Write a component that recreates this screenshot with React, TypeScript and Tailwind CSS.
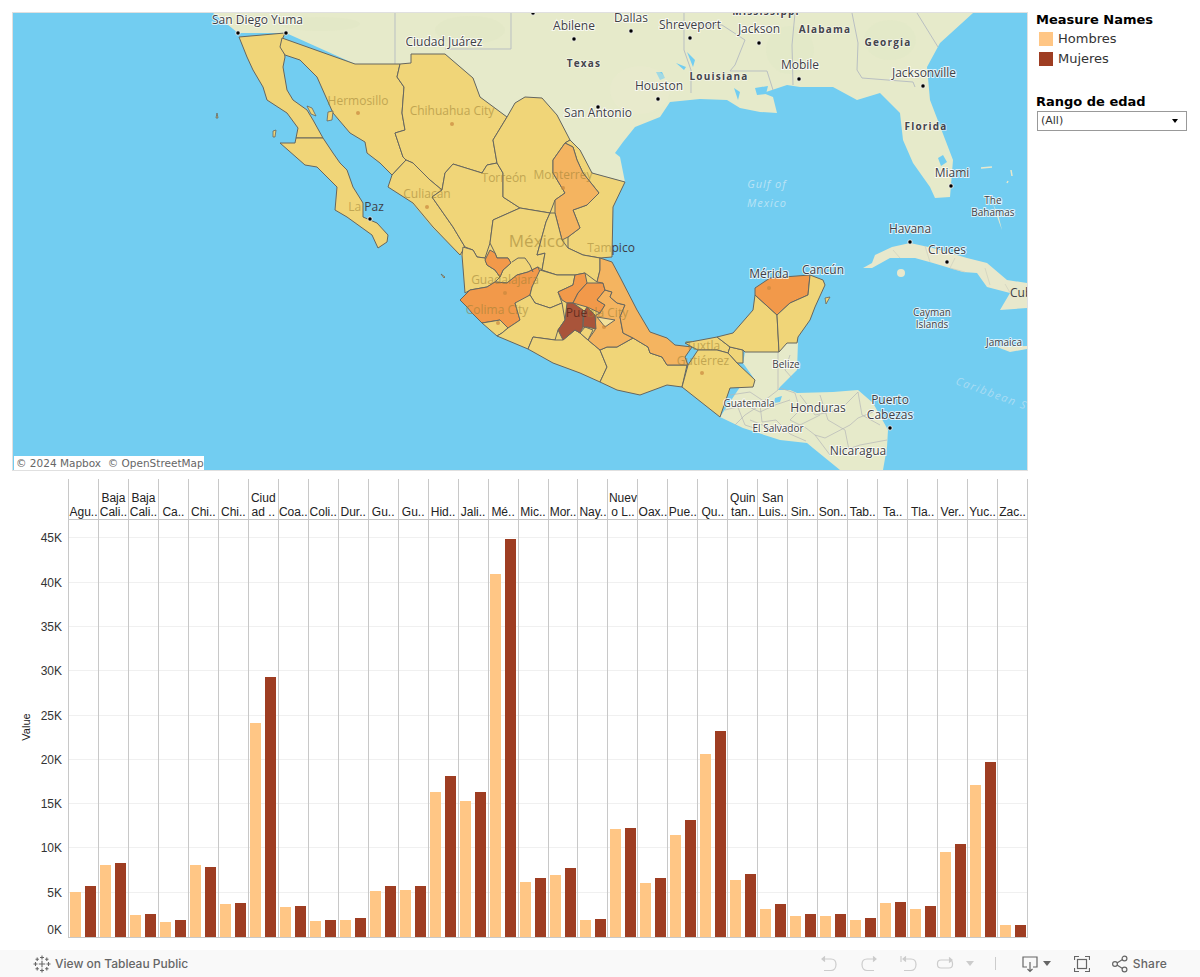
import type { ReactNode } from 'react';

const HOMBRES = '#ffc685';
const MUJERES = '#9e3d22';
const BASE = '#f0d578';
const MID = '#f4b460';
const ORANGE = '#f2994a';
const DARK = '#a9543a';

// [label lines, hombres, mujeres] values are in thousands
const STATES: [string[], number, number][] = [
  [['Agu..'], 5.1, 5.8],
  [['Baja', 'Cali..'], 8.15, 8.4],
  [['Baja', 'Cali..'], 2.45, 2.6],
  [['Ca..'], 1.65, 1.9],
  [['Chi..'], 8.15, 7.9],
  [['Chi..'], 3.7, 3.85],
  [['Ciud', 'ad ..'], 24.2, 29.3],
  [['Coa..'], 3.35, 3.5],
  [['Coli..'], 1.8, 1.9],
  [['Dur..'], 1.9, 2.1],
  [['Gu..'], 5.2, 5.8],
  [['Gu..'], 5.3, 5.8],
  [['Hid..'], 16.4, 18.2],
  [['Jali..'], 15.4, 16.4],
  [['Mé..'], 41, 44.9],
  [['Mic..'], 6.2, 6.7],
  [['Mor..'], 7.0, 7.8],
  [['Nay..'], 1.9, 2.0],
  [['Nuev', 'o L..'], 12.2, 12.3],
  [['Oax..'], 6.1, 6.7],
  [['Pue..'], 11.5, 13.2],
  [['Qu..'], 20.6, 23.2],
  [['Quin', 'tan..'], 6.4, 7.1],
  [['San', 'Luis..'], 3.2, 3.7],
  [['Sin..'], 2.4, 2.55],
  [['Son..'], 2.4, 2.6],
  [['Tab..'], 1.95, 2.1],
  [['Ta..'], 3.8, 3.9],
  [['Tla..'], 3.2, 3.5],
  [['Ver..'], 9.6, 10.5],
  [['Yuc..'], 17.2, 19.7],
  [['Zac..'], 1.4, 1.4],
];

const TICKS = [0, 5, 10, 15, 20, 25, 30, 35, 40, 45];
const PX_PER_K = 8.86;

const LAND_US =
  '395,13 205,13 213,13 222,20 238,33 286,33 355,64 411,64 411,54 445,54 473,78 480,97 507,117 515,103 525,97 542,98 557,115 570,140 580,150 592,173 625,182 620,157 615,153 623,142 635,127 660,117 670,102 700,99 727,100 740,108 760,112 777,113 773,97 763,93 787,85 800,87 833,87 857,100 880,93 900,113 903,140 913,163 930,187 935,198 950,197 953,160 930,100 927,67 940,43 973,13';

const CENTRAL =
  '745,352 778,352 787,343 798,342 797,370 780,387 778,390 790,390 797,393 833,392 858,390 873,403 888,430 887,447 883,470 840,470 813,448 807,443 780,440 743,428 720,417 740,387 755,380 743,363';

const CUBA =
  '863,268 872,263 875,255 892,247 910,243 933,248 967,258 987,263 1007,280 1027,283 1027,308 1000,310 1010,293 987,287 977,273 963,272 933,263 915,258 890,258 872,268';

const MEX_BASE = '392,175 507,117 600,258 612,290 625,340 600,370 535,345 500,333 470,300 462,256 433,228 413,204';

const REGIONS: [string, string][] = [
  // Baja California
  ['239,37 285,33 282,40 285,57 283,67 287,90 293,100 307,110 313,120 323,138 296,138 298,128 287,113 267,100 263,87 253,70 247,57', BASE],
  // Baja California Sur
  ['296,138 323,138 333,153 340,163 347,170 353,187 363,203 363,217 377,223 388,235 387,242 378,248 372,235 347,217 335,210 337,187 317,167 305,165 280,143 295,143', BASE],
  // Sonora
  ['282,38 355,64 400,64 397,77 404,87 402,113 405,130 395,133 403,157 406,160 392,175 380,163 367,153 365,142 350,133 333,113 317,77 300,60 285,55 280,47', BASE],
  // Chihuahua
  ['400,64 411,63 411,54 445,54 473,78 480,97 507,117 493,140 497,163 487,165 482,173 453,164 445,173 442,190 430,180 413,163 406,160 403,157 395,133 405,130 402,113 404,87 397,77', BASE],
  // Sinaloa
  ['392,175 406,160 413,163 430,180 442,190 432,197 453,227 465,247 460,255 433,227 413,203 388,187', BASE],
  // Durango
  ['445,173 453,164 482,173 487,165 497,163 503,173 503,197 520,208 493,220 490,243 485,258 477,257 473,250 465,247 453,227 432,197 442,190', BASE],
  // Coahuila
  ['507,117 515,103 525,97 542,98 557,115 570,140 565,143 553,160 553,173 565,193 555,200 550,213 520,208 503,197 503,173 497,163 493,140', BASE],
  // Tamaulipas
  ['570,140 580,150 592,173 625,182 613,207 612,257 600,258 583,255 568,248 568,237 580,228 573,210 587,205 599,193 583,173 577,160 573,147 565,143', BASE],
  // Nuevo Leon
  ['565,143 573,147 577,160 583,173 599,193 587,205 573,210 580,228 568,237 562,240 555,213 555,200 565,193 553,173 553,160', MID],
  // Zacatecas
  ['493,220 520,208 550,213 546,222 537,255 545,253 542,270 538,267 528,272 517,275 507,283 495,282 500,277 503,270 511,263 508,258 497,258 495,253 490,243', BASE],
  // San Luis Potosi
  ['550,213 555,213 562,240 568,248 583,255 600,258 600,270 597,282 585,273 575,275 557,275 542,270 545,253 537,255 546,222', BASE],
  // Nayarit
  ['465,293 462,255 463,247 473,250 477,257 485,258 487,265 495,270 500,277 495,282 487,287 470,290', BASE],
  // Aguascalientes
  ['490,250 495,253 497,258 508,258 511,263 503,270 500,277 495,270 487,265 485,260', ORANGE],
  // Jalisco
  ['460,300 470,290 487,287 495,282 507,283 517,275 528,272 538,267 540,272 532,287 530,295 520,302 515,303 520,320 508,328 500,320 482,323 472,313 467,307', ORANGE],
  // Colima
  ['482,323 500,320 508,328 502,333 497,336', BASE],
  // Guanajuato
  ['540,270 557,275 575,275 573,285 558,292 562,303 550,308 535,303 530,295 532,287', BASE],
  // Queretaro
  ['558,292 573,285 575,275 585,273 587,283 578,293 573,303 567,303 562,300', ORANGE],
  // Hidalgo
  ['587,283 603,283 605,290 597,300 605,305 600,313 587,307 573,303 578,293', ORANGE],
  // Michoacan
  ['515,303 530,295 535,303 550,308 562,303 565,320 558,330 555,340 533,337 528,349 497,336 502,333 508,328 520,320', BASE],
  // Guerrero
  ['528,349 533,337 555,340 563,340 575,330 580,333 588,340 600,350 607,367 600,382 580,373 553,363', BASE],
  // Oaxaca
  ['600,350 607,347 617,347 633,338 648,347 650,353 662,357 667,365 687,365 682,387 667,385 640,395 617,390 600,382 607,367', BASE],
  // Puebla
  ['605,290 612,292 610,297 617,303 625,305 620,317 623,333 633,338 617,347 607,347 600,350 588,340 595,330 596,315 600,313 605,305 597,300', MID],
  // Tlaxcala
  ['597,317 615,320 605,327', '#f3e09a'],
  // Veracruz
  ['600,258 612,262 620,277 637,310 650,332 667,338 675,345 692,347 685,357 688,365 667,365 662,357 650,353 648,347 633,338 623,333 620,317 625,305 617,303 610,297 612,292 605,290 603,283 597,282 600,270', MID],
  // Morelos
  ['580,333 585,327 593,330 588,340', BASE],
  // Estado de Mexico
  ['567,303 573,303 583,310 583,327 580,333 575,330 563,340 558,330 565,320', DARK],
  ['587,307 595,315 596,329 587,327 583,327 584,312', DARK],
  // Tabasco
  ['685,343 717,337 730,347 728,353 717,350 698,350 692,347', BASE],
  ['730,347 743,350 743,363 737,363 728,353', BASE],
  // Chiapas
  ['688,365 698,350 717,350 728,353 737,363 755,380 753,387 730,388 720,417 682,387', BASE],
  // Campeche
  ['717,337 733,333 753,310 755,295 777,315 779,352 745,352 743,350 730,347', BASE],
  // Yucatan
  ['755,295 755,288 770,278 810,275 808,295 790,303 777,315', ORANGE],
  // Quintana Roo
  ['810,275 823,280 825,285 815,307 810,320 798,337 797,343 787,343 779,352 777,315 790,303 808,295', BASE],
];

const US_LINES = [
  '395,13 395,64',
  '511,13 511,49 445,49',
  '684,13 684,50 691,70 691,93',
  '684,25 722,25 745,40 735,65 730,71 767,71 773,90',
  '795,13 792,45 793,85',
  '852,13 858,43 857,70 862,78 913,82 915,87',
  '917,13 938,47',
];

const CA_LINES = [
  '778,352 778,390 760,404 762,422 776,420 790,434 806,441',
  '780,388 795,393 800,410 790,420 806,428 815,435 825,438 850,425 858,418 873,412',
  '730,395 750,392 765,402 745,415 735,425',
  '800,395 815,415 840,410 858,392',
  '815,435 830,455 860,445 887,440',
  '750,420 770,428 800,425 820,415',
  '725,410 745,405 760,412 775,405 790,400',
  '735,400 745,425 760,430',
  '820,395 828,420 845,430 850,455',
  '858,392 862,415 880,425',
  '790,355 785,370 792,378',
];

const CUBA_LINES = ['893,250 900,258', '925,246 930,262', '955,258 950,268 965,272', '985,268 990,285', '1005,284 1012,296'];

type Label = [string, number, number, number?];
const DARK_LABELS: Label[] = [
  ['San Diego', 240, 24, 12],
  ['Yuma', 287, 24, 12],
  ['Ciudad Juárez', 444, 46, 12],
  ['Abilene', 574, 30, 12],
  ['Dallas', 631, 22, 12],
  ['Shreveport', 690, 29, 12],
  ['Jackson', 759, 33, 12],
  ['Mobile', 800, 69, 12],
  ['Jacksonville', 924, 77, 12],
  ['Houston', 659, 90, 12],
  ['San Antonio', 598, 117, 12],
  ['Miami', 952, 177, 12],
  ['Havana', 910, 233, 12],
  ['Cruces', 947, 254, 12],
  ['Mérida', 769, 278, 12],
  ['Cancún', 823, 274, 12],
  ['Honduras', 818, 412, 12],
  ['Puerto', 890, 404, 12],
  ['Cabezas', 890, 419, 12],
  ['Nicaragua', 858, 455, 12],
  ['The', 993, 204, 10],
  ['Bahamas', 993, 216, 10],
  ['Cayman', 932, 316, 10],
  ['Islands', 932, 328, 10],
  ['Jamaica', 1004, 346, 10],
  ['Belize', 786, 368, 10],
  ['Guatemala', 749, 407, 10],
  ['El Salvador', 778, 432, 10],
];

const REGION_LABELS: Label[] = [
  ['Alabama', 825, 33],
  ['Georgia', 888, 46],
  ['Texas', 584, 67],
  ['Louisiana', 719, 80],
  ['Florida', 926, 130],
  ['Mississippi', 766, 15],
];

const MUTED_LABELS: Label[] = [
  ['Hermosillo', 358, 105, 12],
  ['Chihuahua City', 452, 115, 12],
  ['Torreón', 504, 182, 12],
  ['Monterrey', 563, 179, 12],
  ['Culiacán', 427, 198, 12],
  ['Guadalajara', 505, 284, 12],
  ['Colima City', 497, 314, 12],
  ['Tuxtla', 703, 350, 12],
  ['Gutiérrez', 703, 365, 12],
  ['México', 537, 247, 17],
];

const BLACK_DOTS = [
  [238, 33], [286, 33], [533, 13], [574, 39], [631, 31], [690, 38], [759, 43], [799, 79], [923, 86],
  [951, 186], [910, 242], [947, 262], [598, 107], [658, 99], [890, 428], [370, 219],
];
const MUTED_DOTS = [
  [358, 113], [452, 124], [427, 207], [563, 188], [505, 293], [498, 323], [604, 327], [702, 373], [769, 288],
];

function MapArea() {
  return (
    <div className="relative w-[1016px] h-[459px] border border-[#e0e0e0] overflow-hidden shrink-0">
      <svg viewBox="13 13 1014 457" width={1014} height={457} className="block bg-[#72cdf1] font-['Open_Sans',sans-serif]">
        <polygon points={LAND_US} fill="#e6eaca" />
        <polygon points={CENTRAL} fill="#e6eaca" />
        <polygon points={CUBA} fill="#e8e8cc" />
        <ellipse cx="901" cy="273" rx="4" ry="4" fill="#e8e8cc" />
        <polygon points="997,347 1027,346 1027,349 1010,352" fill="#e8e8cc" />
        <polygon points="993,204 998,214 1002,230 999,222" fill="#e8e8cc" />
        <path d="M981 168 L992 167 M1011 170 L1012 176 M1008 181 L1007 183" stroke="#e8e8cc" strokeWidth="1.5" fill="none" />
        <path d="M938 158 L943 155 L947 162 L941 166 Z M656 72 L660 80 L665 78 L662 72 Z M687 52 L693 67 L695 60 Z M676 63 L684 70 L686 67 Z M734 88 L738 100 L740 92 Z M755 88 L768 86 L766 94 L757 95 Z M775 398 L782 396 L780 402 L774 403 Z" fill="#72cdf1" />
        <ellipse cx="320" cy="24" rx="40" ry="7" fill="#dfe6bf" opacity="0.3" />
        <ellipse cx="470" cy="30" rx="35" ry="14" fill="#dfe6bf" opacity="0.3" />
        <ellipse cx="640" cy="90" rx="30" ry="24" fill="#eaead0" opacity="0.4" />
        <ellipse cx="790" cy="50" rx="24" ry="24" fill="#dfe8c2" opacity="0.3" />
        <ellipse cx="890" cy="40" rx="26" ry="20" fill="#dfe8c2" opacity="0.3" />
        {US_LINES.map((p) => (
          <polyline key={p} points={p} fill="none" stroke="#b9bfc2" strokeWidth="1" />
        ))}
        {CA_LINES.map((p) => (
          <polyline key={p} points={p} fill="none" stroke="#b4b6b8" strokeWidth="0.7" />
        ))}
        {CUBA_LINES.map((p) => (
          <polyline key={p} points={p} fill="none" stroke="#cfd0bd" strokeWidth="0.7" />
        ))}
        <polygon points={MEX_BASE} fill={BASE} />
        {REGIONS.map(([pts, fill], i) => (
          <polygon key={i} points={pts} fill={fill} stroke="#66665f" strokeWidth="1" strokeLinejoin="round" />
        ))}
        <polyline points="512,262 518,258 525,258 530,265 533,272" fill="none" stroke="#66665f" strokeWidth="1" />
        <path d="M307 106 L312 108 L316 116 L311 114 Z M328 112 L333 111 L332 120 L327 121 Z M217 113 L218 118 L216 118 Z M273 131 L276 130 L275 137 L273 137 Z M441 274 L445 277 L444 278 Z M825 298 L830 297 L826 304 Z" fill={BASE} stroke="#66665f" strokeWidth="0.8" />
        {MUTED_DOTS.map(([x, y]) => (
          <circle key={`${x}-${y}`} cx={x} cy={y} r="2" fill="#c9873d" opacity="0.7" />
        ))}
        {BLACK_DOTS.map(([x, y]) => (
          <circle key={`${x}-${y}`} cx={x} cy={y} r="2.2" fill="#000" stroke="#fff" strokeWidth="0.8" />
        ))}
        {MUTED_LABELS.map(([t, x, y, s]) => (
          <text key={t} x={x} y={y} fontSize={s} textAnchor="middle" fill="#9b7f33" opacity="0.55">
            {t}
          </text>
        ))}
        {DARK_LABELS.map(([t, x, y, s]) => (
          <text key={t} x={x} y={y} fontSize={s} textAnchor="middle" fill="#3f3f46" stroke="#ffffff" strokeOpacity="0.75" strokeWidth="2" className="[paint-order:stroke]">
            {t}
          </text>
        ))}
        {REGION_LABELS.map(([t, x, y]) => (
          <text key={t} x={x} y={y} fontSize="10" fontWeight="700" letterSpacing="1.2" textAnchor="middle" fill="#44444c" stroke="#ffffff" strokeOpacity="0.6" strokeWidth="1.5" className="[paint-order:stroke]">
            {t}
          </text>
        ))}
        <text x={611} y={252} fontSize="12" textAnchor="middle" fill="#3f3f46">
          <tspan fill="#9b7f33" fillOpacity="0.55">Tam</tspan>
          <tspan>pico</tspan>
        </text>
        <text x={366} y={211} fontSize="12" textAnchor="middle" fill="#3f3f46">
          <tspan fill="#9b7f33" fillOpacity="0.55">La </tspan>
          <tspan>Paz</tspan>
        </text>
        <text x={597} y={317} fontSize="12" textAnchor="middle" fill="#9b7f33" fillOpacity="0.6">
          <tspan fill="#5d2a1c" fillOpacity="0.9">Pue</tspan>
          <tspan>bla City</tspan>
        </text>
        <text x={1010} y={297} fontSize="12" fill="#3f3f46">Cuba</text>
        <text x={767} y={188} fontSize="11" fontStyle="italic" letterSpacing="1" textAnchor="middle" fill="#b9e3f5">Gulf of</text>
        <text x={767} y={207} fontSize="11" fontStyle="italic" letterSpacing="1" textAnchor="middle" fill="#b9e3f5">Mexico</text>
        <text x={955} y={384} fontSize="11" fontStyle="italic" letterSpacing="1.5" fill="#a9dcf3" transform="rotate(20 955 384)">Caribbean Sea</text>
      </svg>
      <div className="absolute left-[1px] bottom-[0px] h-[14px] w-[190px] bg-white pl-[2px] text-[10.5px] leading-[14px] whitespace-nowrap text-[#666666] font-['DejaVu_Sans',sans-serif]">
        © 2024 Mapbox &nbsp;© OpenStreetMap
      </div>
    </div>
  );
}

function Sidebar() {
  return (
    <div className="ml-[8px] pt-[1px] w-[164px] font-['DejaVu_Sans',sans-serif] text-black">
      <div className="text-[13px] leading-[14px] font-bold">Measure Names</div>
      <div className="mt-[2px] flex items-center h-[20px] pl-[3px] gap-[5px] text-[13px] text-[#333333]">
        <span className="w-[14px] h-[14px] bg-[#ffc685]" />
        Hombres
      </div>
      <div className="flex items-center h-[20px] pl-[3px] gap-[5px] text-[13px] text-[#333333]">
        <span className="w-[14px] h-[14px] bg-[#9e3d22]" />
        Mujeres
      </div>
      <div className="mt-[26px] text-[13px] leading-[14px] font-bold">Rango de edad</div>
      <div className="mt-[2px] ml-[1px] w-[150px] h-[20px] border border-[#999999] flex items-center justify-between pl-[3px] pr-[8px] text-[11px] text-[#333333]">
        (All)
        <span className="w-0 h-0 border-x-[3px] border-x-transparent border-t-[4px] border-t-black" />
      </div>
    </div>
  );
}

function Chart() {
  return (
    <div className="flex mt-[8px] font-['Liberation_Sans',sans-serif]">
      <div className="relative w-[68px] shrink-0 text-[12px] text-[#333333]">
        <span className="absolute left-[12px] top-[241px] -rotate-90 text-[11px] leading-[14px] text-[#222222]">Value</span>
        {TICKS.map((t) => (
          <span
            key={t}
            className="absolute right-[6px] leading-[14px]"
            style={{ top: 458 - t * PX_PER_K - 7 + (t === 0 ? -7 : 0) }}
          >
            {t}K
          </span>
        ))}
      </div>
      <div className="w-[960px] shrink-0 border-l border-[#c8c8c8]">
        <div className="h-[41px] flex border-b border-[#c8c8c8]">
          {STATES.map(([lines], i) => (
            <div key={i} className="flex-1 min-w-0 flex flex-col items-center justify-end border-r border-[#c8c8c8] text-[12px] leading-[14px] text-[#222222]">
              {lines.map((l, j) => (
                <span key={j} className="whitespace-nowrap">{l}</span>
              ))}
            </div>
          ))}
        </div>
        <div className="relative h-[418px] border-b border-[#c8c8c8]">
          {TICKS.slice(1).map((t) => (
            <div key={t} className="absolute inset-x-0 h-px bg-[#f0f0f0]" style={{ bottom: t * PX_PER_K }} />
          ))}
          <div className="absolute inset-0 flex">
            {STATES.map(([, h, m], i) => (
              <div key={i} className="flex-1 min-w-0 flex items-end justify-center gap-[4px] border-r border-[#c8c8c8]">
                <div className="w-[11px]" style={{ height: h * PX_PER_K, backgroundColor: HOMBRES }} />
                <div className="w-[11px]" style={{ height: m * PX_PER_K, backgroundColor: MUJERES }} />
              </div>
            ))}
          </div>
        </div>
      </div>
    </div>
  );
}

function TableauLogo() {
  const cross = (x: number, y: number, s: number, key: number) => (
    <path key={key} d={`M${x - s} ${y}H${x + s}M${x} ${y - s}V${y + s}`} />
  );
  return (
    <svg width="18" height="18" viewBox="0 0 18 18" fill="none" stroke="#666666" strokeWidth="1.1">
      {cross(9, 9, 3.2, 0)}
      {cross(9, 2.5, 2, 1)}
      {cross(9, 15.5, 2, 2)}
      {cross(2.5, 9, 2, 3)}
      {cross(15.5, 9, 2, 4)}
      {cross(4.2, 4.2, 1.7, 5)}
      {cross(13.8, 4.2, 1.7, 6)}
      {cross(4.2, 13.8, 1.7, 7)}
      {cross(13.8, 13.8, 1.7, 8)}
    </svg>
  );
}

function Icon({ w, children, stroke = '#cccccc' }: { w: number; children: ReactNode; stroke?: string }) {
  return (
    <svg width={w} height={18} viewBox={`0 0 ${w} 18`} fill="none" stroke={stroke} strokeWidth="1.2">
      {children}
    </svg>
  );
}

function Toolbar() {
  return (
    <div className="h-[27px] bg-[#f9f9f9] flex items-center font-['Inter',sans-serif] text-[12px] font-medium text-[#666666]">
      <div className="ml-[33px] flex items-center gap-[4px]">
        <TableauLogo />
        <span>View on Tableau Public</span>
      </div>
      <div className="ml-auto mr-[33px] flex items-center">
        <Icon w={18}>
          <path d="M2 4H11C14 4 16 6 16 9.5S14 15.5 11 15.5H4" />
          <path d="M5 1.5L2 4L5 6.5" fill="#cccccc" />
        </Icon>
        <div className="ml-[22px]">
          <Icon w={18}>
            <path d="M16 4H7C4 4 2 6 2 9.5S4 15.5 7 15.5H14" />
            <path d="M13 1.5L16 4L13 6.5" fill="#cccccc" />
          </Icon>
        </div>
        <div className="ml-[22px]">
          <Icon w={18}>
            <path d="M1 1V7" />
            <path d="M3 4H11C14 4 16 6 16 9.5S14 15.5 11 15.5H4" />
            <path d="M6 1.5L3 4L6 6.5" fill="#cccccc" />
          </Icon>
        </div>
        <div className="ml-[18px]">
          <Icon w={18}>
            <rect x="1.5" y="5" width="15" height="8" rx="3.5" />
            <path d="M13 2.5L16 5L13 7.5" fill="#cccccc" />
          </Icon>
        </div>
        <span className="ml-[12px] w-0 h-0 border-x-[4px] border-x-transparent border-t-[5px] border-t-[#cccccc]" />
        <span className="ml-[21px] w-px h-[13px] bg-[#cccccc]" />
        <div className="ml-[26px]">
          <Icon w={16} stroke="#666666">
            <path d="M5 12H1V2H15V12H11" />
            <path d="M8 7V16M5.5 14L8 16.5L10.5 14" />
          </Icon>
        </div>
        <span className="ml-[5px] w-0 h-0 border-x-[4px] border-x-transparent border-t-[5px] border-t-[#666666]" />
        <div className="ml-[23px]">
          <Icon w={16} stroke="#666666">
            <rect x="3.5" y="4.5" width="9" height="9" />
            <path d="M0.5 5V1.5H5M11 1.5H15.5V5M0.5 13V16.5H5M11 16.5H15.5V13" />
          </Icon>
        </div>
        <div className="ml-[22px]">
          <Icon w={16} stroke="#666666">
            <circle cx="3" cy="9" r="2.4" />
            <circle cx="12.5" cy="3.5" r="2.4" />
            <circle cx="12.5" cy="14.5" r="2.4" />
            <path d="M5 8L10.5 4.5M5 10L10.5 13.5" />
          </Icon>
        </div>
        <span className="ml-[5px] tracking-[0.2px]">Share</span>
      </div>
    </div>
  );
}

export default function App() {
  return (
    <div className="w-[1200px] h-[977px] bg-white flex flex-col overflow-hidden">
      <div className="flex-1">
        <div className="flex pt-[12px] pl-[12px]">
          <MapArea />
          <Sidebar />
        </div>
        <Chart />
      </div>
      <Toolbar />
    </div>
  );
}
